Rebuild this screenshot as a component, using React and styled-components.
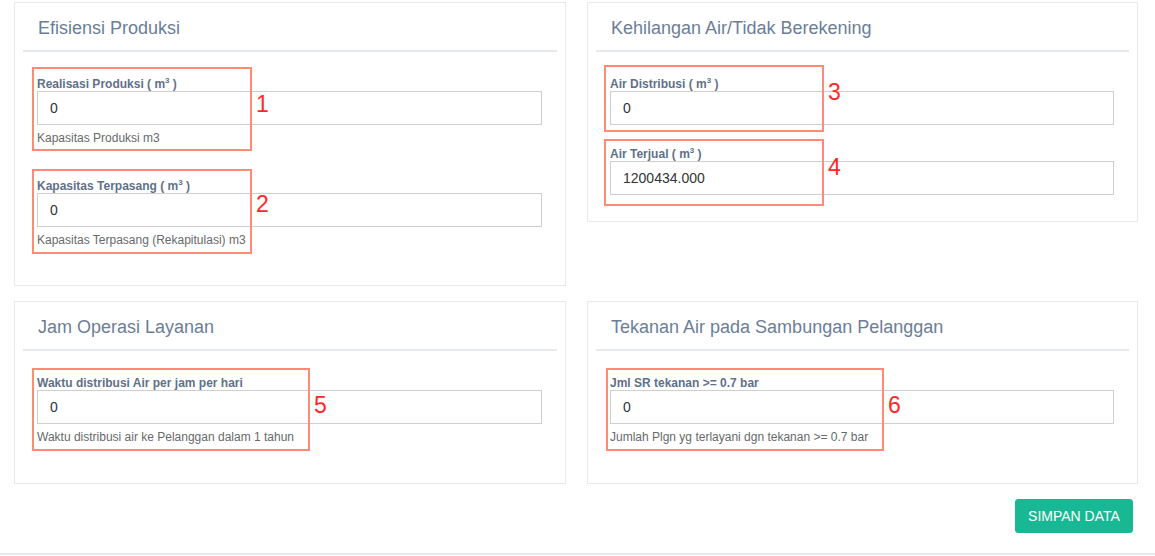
import React from "react";
import styled, { createGlobalStyle } from "styled-components";

const GlobalStyle = createGlobalStyle`
  html, body {
    margin: 0;
    background: #ffffff;
    font-family: "Liberation Sans", Arial, sans-serif;
  }
`;

const Page = styled.div`
  border-bottom: 2px solid #e7eaec;
`;

const Content = styled.div`
  padding: 2px 17px 20px 14px;
`;

const Grid = styled.div`
  display: grid;
  grid-template-columns: 552px 551px;
  column-gap: 21px;
  row-gap: 15px;
  align-items: start;
`;

const Panel = styled.section`
  border: 1px solid #e7eaec;
  background: #fff;
`;

const PanelTitle = styled.h5`
  margin: 0 8px;
  padding: 15px 15px 12px;
  border-bottom: 2px solid #e7eaec;
  font-size: 18px;
  line-height: 20px;
  font-weight: 400;
  color: #6b7e98;
`;

const PanelBody = styled.div`
  padding: 24px 23px ${(p) => p.$pb ?? 5}px 22px;
`;

const FormGroup = styled.div`
  position: relative;
  display: flow-root;
  margin-bottom: 21px;
`;

const Label = styled.label`
  display: block;
  margin-bottom: -2px;
  font-size: 12px;
  line-height: 17px;
  font-weight: 700;
  color: #5f7189;

  sup {
    font-size: 8px;
    line-height: 0;
    vertical-align: 5px;
  }
`;

const Input = styled.input`
  display: block;
  box-sizing: border-box;
  width: 100%;
  height: 34px;
  margin: 0;
  padding: 6px 12px;
  border: 1px solid #cfcfcf;
  border-radius: 0;
  font-family: inherit;
  font-size: 14px;
  color: #333;
  background: #fff;
  outline: none;
`;

const Help = styled.span`
  display: block;
  margin: 5px 0 10px;
  font-size: 12px;
  line-height: 17px;
  color: #676a6c;
`;

const Mark = styled.div`
  position: absolute;
  box-sizing: border-box;
  border: 2px solid #ff8a75;
  pointer-events: none;
`;

const MarkNum = styled.span`
  position: absolute;
  left: calc(100% + 6px);
  font-size: 23px;
  line-height: 23px;
  color: #ff2626;
`;

const Actions = styled.div`
  display: flex;
  justify-content: flex-end;
  padding: 15px 5px 0 0;
`;

const SaveButton = styled.button`
  height: 34px;
  width: 118px;
  padding: 0;
  border: 1px solid #19b894;
  border-radius: 3px;
  background: #19b894;
  color: #fff;
  font-family: inherit;
  font-size: 14px;
  cursor: pointer;
`;

function Field({ label, value, help, mark }) {
  return (
    <FormGroup>
      <Label>{label}</Label>
      <Input defaultValue={value} />
      {help && <Help>{help}</Help>}
      {mark && (
        <Mark
          style={{
            left: mark.x,
            top: mark.y,
            width: mark.w,
            height: mark.h,
          }}
        >
          <MarkNum style={{ top: mark.ny }}>{mark.n}</MarkNum>
        </Mark>
      )}
    </FormGroup>
  );
}

const m3 = (text) => (
  <>
    {text} ( m<sup>3</sup> )
  </>
);

export default function App() {
  return (
    <Page>
      <GlobalStyle />
      <Content>
        <Grid>
          <Panel>
            <PanelTitle>Efisiensi Produksi</PanelTitle>
            <PanelBody>
              <Field
                label={m3("Realisasi Produksi")}
                value="0"
                help="Kapasitas Produksi m3"
                mark={{ n: 1, x: -5, y: -9, w: 220, h: 84, ny: 24 }}
              />
              <Field
                label={m3("Kapasitas Terpasang")}
                value="0"
                help="Kapasitas Terpasang (Rekapitulasi) m3"
                mark={{ n: 2, x: -5, y: -9, w: 220, h: 85, ny: 22 }}
              />
            </PanelBody>
          </Panel>

          <Panel>
            <PanelTitle>Kehilangan Air/Tidak Berekening</PanelTitle>
            <PanelBody>
              <Field
                label={m3("Air Distribusi")}
                value="0"
                mark={{ n: 3, x: -6, y: -11, w: 220, h: 67, ny: 14 }}
              />
              <Field
                label={m3("Air Terjual")}
                value="1200434.000"
                mark={{ n: 4, x: -6, y: -7, w: 220, h: 67, ny: 15 }}
              />
            </PanelBody>
          </Panel>

          <Panel>
            <PanelTitle>Jam Operasi Layanan</PanelTitle>
            <PanelBody $pb={6}>
              <Field
                label="Waktu distribusi Air per jam per hari"
                value="0"
                help="Waktu distribusi air ke Pelanggan dalam 1 tahun"
                mark={{ n: 5, x: -5, y: -7, w: 278, h: 83, ny: 24 }}
              />
            </PanelBody>
          </Panel>

          <Panel>
            <PanelTitle>Tekanan Air pada Sambungan Pelanggan</PanelTitle>
            <PanelBody $pb={6}>
              <Field
                label="Jml SR tekanan >= 0.7 bar"
                value="0"
                help="Jumlah Plgn yg terlayani dgn tekanan >= 0.7 bar"
                mark={{ n: 6, x: -4, y: -7, w: 278, h: 83, ny: 24 }}
              />
            </PanelBody>
          </Panel>
        </Grid>

        <Actions>
          <SaveButton type="button">SIMPAN DATA</SaveButton>
        </Actions>
      </Content>
    </Page>
  );
}
